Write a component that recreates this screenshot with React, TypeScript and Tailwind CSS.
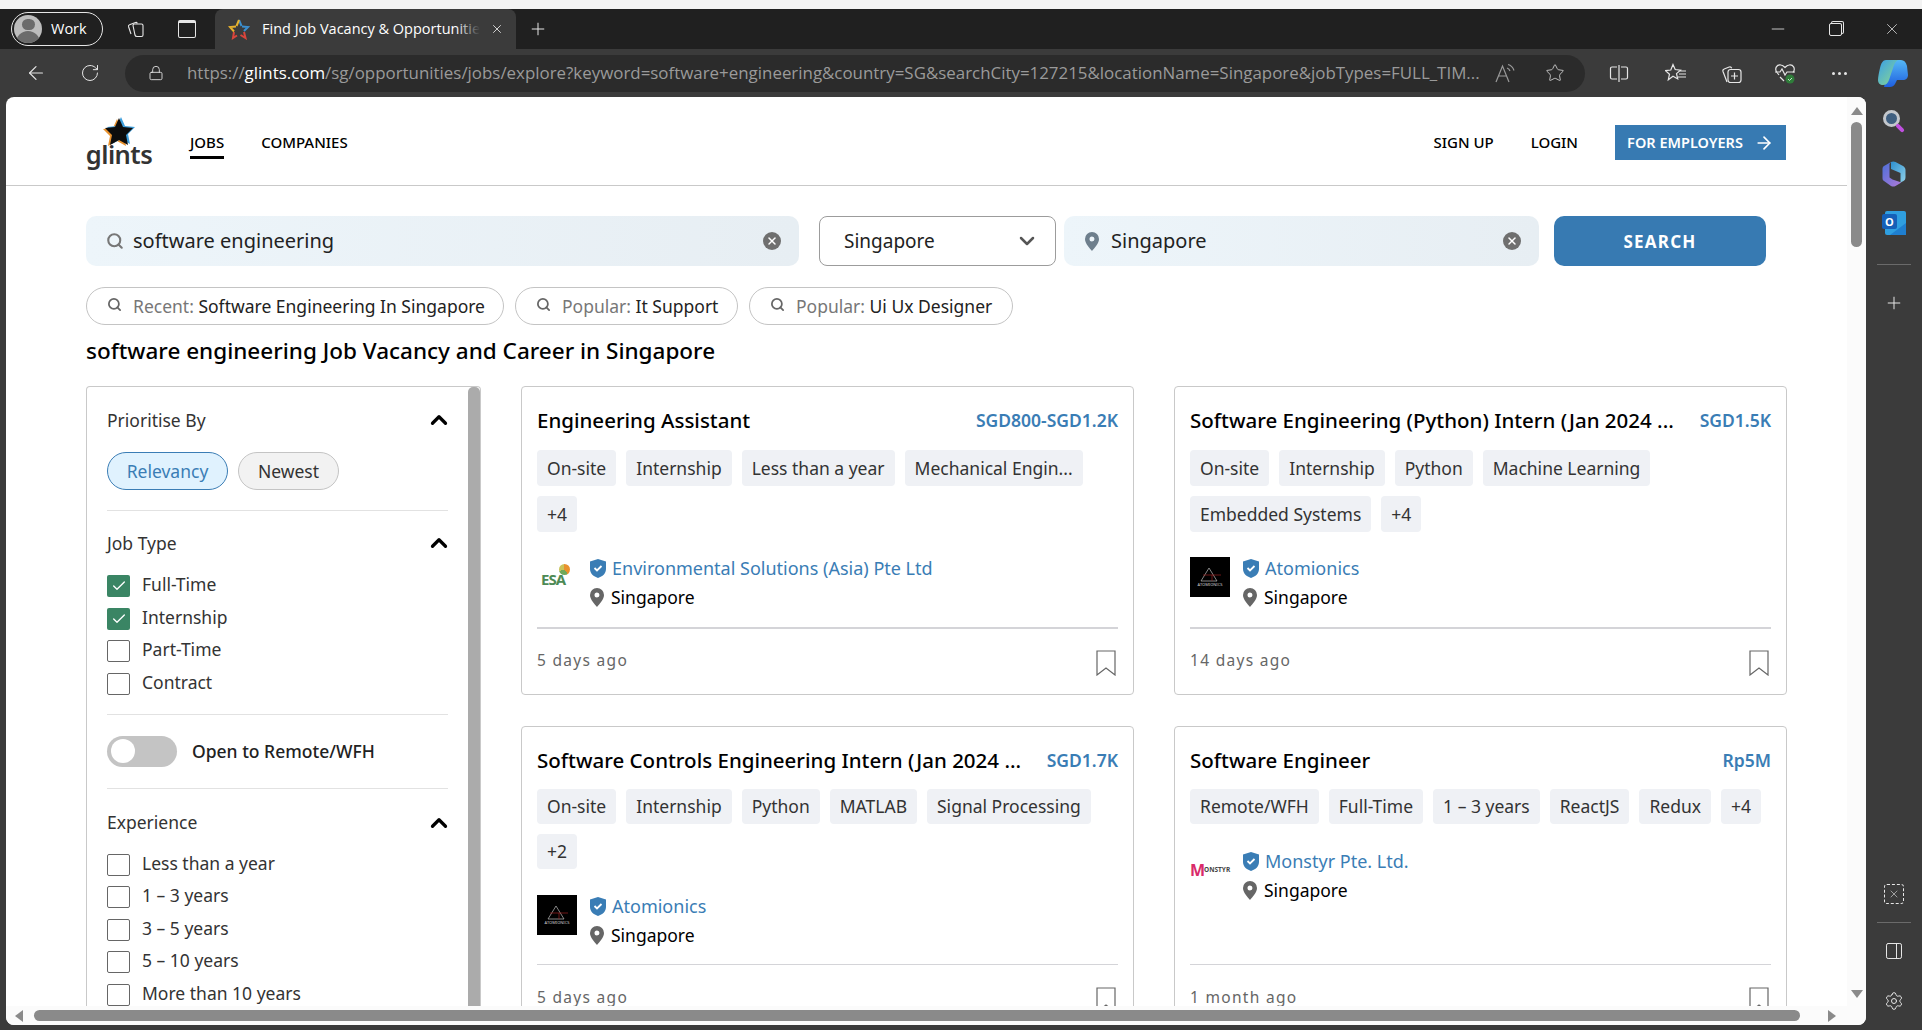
import React from "react";
import { ArrowLeft, ArrowRight, ChevronDown, ChevronUp, Check, Lock, Minus, PanelRight, Plus, RotateCw, Search, Settings, Star, X } from "lucide-react";

const FONT = "font-['Noto_Sans',sans-serif]";

const StarLogo = () => (
    <svg width="34" height="30" viewBox="0 0 34 30">
        <polygon transform="translate(-2 1)" fill="#e8912d" points="17,1 21,10 31,11 24,18 26,28 17,23 8,28 10,18 3,11 13,10" />
        <polygon transform="translate(2 -1)" fill="#3f9fdc" points="17,1 21,10 31,11 24,18 26,28 17,23 8,28 10,18 3,11 13,10" />
        <polygon fill="#0d0d0d" points="17,1 21,10 31,11 24,18 26,28 17,23 8,28 10,18 3,11 13,10" />
    </svg>
);

const Favicon = () => (
    <svg width="22" height="22" viewBox="0 0 22 22" fill="none" strokeWidth="2">
        <path d="M11 2l2.5 6" stroke="#3b8fd0" />
        <path d="M14 8.5l6 .5-4 4" stroke="#3b8fd0" />
        <path d="M16 14l1.5 6-5-3" stroke="#d9453c" />
        <path d="M9 17.5L5 20l1-6" stroke="#d9453c" />
        <path d="M6 13.5L2 9l6-.5" stroke="#e8b22d" />
        <path d="M8.5 8L11 2" stroke="#e8b22d" />
    </svg>
);

const Shield = () => (
    <svg width="16" height="19" viewBox="0 0 16 19" className="shrink-0">
        <path d="M8 0l8 2.5V10c0 4.5-3.5 7.5-8 9-4.500-1.500-8-4.500-8-9V2.500z" fill="#3a7db5" />
        <path d="M4.500 9l2.500 2.500 4.500-4.500" stroke="#fff" strokeWidth="1.800" fill="none" />
    </svg>
);

const Pin = () => (
    <svg width="14" height="19" viewBox="0 0 14 19" className="shrink-0">
        <path fillRule="evenodd" d="M7 0a7 7 0 017 7c0 4.500-4.500 9-7 12-2.500-3-7-7.500-7-12a7 7 0 017-7zm0 4.500a2.500 2.500 0 100 5 2.500 2.500 0 000-5z" fill="#666" />
    </svg>
);

const ClearIcon = () => (
    <div className="w-[18px] h-[18px] rounded-full bg-[#6f6f6f] flex items-center justify-center">
        <X className="w-3 h-3 text-white" strokeWidth={3} />
    </div>
);

const EsaLogo = () => (
    <div className="w-10 h-10 shrink-0 relative flex items-end">
        <span className="text-[15px] font-bold text-[#4d8a55] leading-none tracking-[-1px] ml-1 mb-[10px]">ESA</span>
        <div className="absolute left-[22px] top-[7px] w-[11px] h-[11px] rounded-full bg-[conic-gradient(#e8912d_0_40%,#6fa85a_40%_70%,#c9c35a_70%_100%)]" />
    </div>
);

const AtomLogo = () => (
    <div className="w-10 h-10 bg-black flex flex-col items-center justify-center shrink-0">
        <svg width="26" height="16" viewBox="0 0 26 16" fill="none" strokeWidth="0.700">
            <path d="M12 1L4 14h16z" stroke="#bbb" />
            <path d="M6 8h18M15 8v6" stroke="#9c2020" />
        </svg>
        <span className="text-[4px] leading-none text-[#ccc]">ATOMIONICS</span>
    </div>
);

const MonstyrLogo = () => (
    <div className="w-10 h-10 shrink-0 flex items-center">
        <span className="text-[16px] font-bold text-[#d92b6a] leading-none">M</span>
        <span className="text-[6.500px] font-bold text-[#444] leading-none -ml-[1px]">ONSTYR</span>
    </div>
);

type Job = {
    title: string;
    salary: string;
    tags: string[];
    company: string;
    logo: React.ReactNode;
    time: string;
    secondRow?: boolean;
};

const jobs: Job[] = [
    { title: "Engineering Assistant", salary: "SGD800-SGD1.2K", tags: ["On-site", "Internship", "Less than a year", "Mechanical Engin...", "+4"], company: "Environmental Solutions (Asia) Pte Ltd", logo: <EsaLogo />, time: "5 days ago" },
    { title: "Software Engineering (Python) Intern (Jan 2024 ...", salary: "SGD1.5K", tags: ["On-site", "Internship", "Python", "Machine Learning", "Embedded Systems", "+4"], company: "Atomionics", logo: <AtomLogo />, time: "14 days ago" },
    { title: "Software Controls Engineering Intern (Jan 2024 ...", salary: "SGD1.7K", tags: ["On-site", "Internship", "Python", "MATLAB", "Signal Processing", "+2"], company: "Atomionics", logo: <AtomLogo />, time: "5 days ago", secondRow: true },
    { title: "Software Engineer", salary: "Rp5M", tags: ["Remote/WFH", "Full-Time", "1 – 3 years", "ReactJS", "Redux", "+4"], company: "Monstyr Pte. Ltd.", logo: <MonstyrLogo />, time: "1 month ago", secondRow: true },
];

function JobCard({ job }: { job: Job }) {
    return (
        <div className="border border-[#c9c9c9] rounded-[4px] px-[15px] flex flex-col">
            <div className="flex justify-between items-center h-[24px] mt-[21px] gap-4">
                <span className="text-[20.500px] font-medium text-black whitespace-nowrap">{job.title}</span>
                <span className="text-[17.500px] font-semibold text-[#3a7db5] whitespace-nowrap">{job.salary}</span>
            </div>
            <div className={job.secondRow ? "flex flex-wrap gap-[10px] mt-[17px]" : "flex flex-wrap gap-[10px] mt-[18px]"}>
                {job.tags.map((tag) => (
                    <span key={tag} className={job.secondRow
                        ? "h-[35px] px-[10px] flex items-center bg-[#eff1f5] rounded-[4px] text-[17.500px] text-[#333]"
                        : "h-[36px] px-[10px] flex items-center bg-[#eff1f5] rounded-[4px] text-[17.500px] text-[#333]"}>{tag}</span>
                ))}
            </div>
            <div className={job.secondRow ? "flex gap-[13px] mt-[26px]" : "flex gap-[13px] mt-[25px]"}>
                {job.logo}
                <div className="flex flex-col -mt-[2px]">
                    <div className="flex items-center gap-[6px] h-[26px]">
                        <Shield />
                        <span className="text-[18px] text-[#3a7db5] whitespace-nowrap">{job.company}</span>
                    </div>
                    <div className="flex items-center gap-[7px] h-[30px] mt-[1px]">
                        <Pin />
                        <span className="text-[17.500px] text-black">Singapore</span>
                    </div>
                </div>
            </div>
            <div className={job.secondRow
                ? "mt-auto h-[67px] shrink-0 border-t border-[#d4d4d8] flex justify-between pt-[22px]"
                : "mt-auto h-[67px] shrink-0 border-t-2 border-[#d4d4d8] flex justify-between pt-[21px]"}>
                <span className="text-[15.500px] tracking-[1.300px] text-[#666] leading-[20px]">{job.time}</span>
                <svg width="20" height="26" viewBox="0 0 20 26" fill="none" stroke="#666" strokeWidth="1.200" className="mr-[2px]">
                    <path d="M1 1h18v24l-9-7-9 7z" />
                </svg>
            </div>
        </div>
    );
}

function CheckRow({ label, checked }: { label: string; checked?: boolean }) {
    return (
        <div className="flex items-center gap-[12px] h-[22px] mb-[10.500px]">
            {checked ? (
                <div className="w-[23px] h-[22px] rounded-[2px] bg-[#3a8564] flex items-center justify-center">
                    <Check className="w-4 h-4 text-white" strokeWidth={2} />
                </div>
            ) : (
                <div className="w-[23px] h-[22px] rounded-[2px] border border-[#666] bg-white" />
            )}
            <span className="text-[17.500px] text-[#333] -mt-[3px]">{label}</span>
        </div>
    );
}

function SectionTitle({ title }: { title: string }) {
    return (
        <div className="flex justify-between items-center h-[24px]">
            <span className="text-[17.500px] text-[#333]">{title}</span>
            <ChevronUp className="w-[26px] h-[26px] text-black -mr-[4px]" strokeWidth={3} />
        </div>
    );
}

function FilterPanel() {
    return (
        <div className="w-[395px] shrink-0 border-x border-t border-[#c9c9c9] rounded-t-[4px] flex h-[700px]">
            <div className="w-[341px] ml-5 pt-[21px]">
                <SectionTitle title="Prioritise By" />
                <div className="flex gap-[10px] mt-[20px]">
                    <span className="h-[38px] w-[121px] flex items-center justify-center rounded-full border border-[#3a7db5] bg-[#e0f2fe] text-[17.500px] text-[#3a7db5]">Relevancy</span>
                    <span className="h-[38px] w-[101px] flex items-center justify-center rounded-full border border-[#c4c4c4] bg-[#f2f2f2] text-[17.500px] text-[#333]">Newest</span>
                </div>
                <div className="border-t border-[#e2e2e2] mt-[20px]" />
                <div className="mt-[20px]"><SectionTitle title="Job Type" /></div>
                <div className="mt-[20px]">
                    <CheckRow label="Full-Time" checked />
                    <CheckRow label="Internship" checked />
                    <CheckRow label="Part-Time" />
                    <CheckRow label="Contract" />
                </div>
                <div className="border-t border-[#e2e2e2] mt-[19px]" />
                <div className="flex items-center gap-[15px] mt-[21px] h-[31px]">
                    <div className="w-[70px] h-[31px] rounded-full bg-[#c4c4c4] flex items-center pl-[4px]">
                        <div className="w-[24px] h-[24px] rounded-full bg-white" />
                    </div>
                    <span className="text-[17.500px] font-medium text-[#222]">Open to Remote/WFH</span>
                </div>
                <div className="border-t border-[#e2e2e2] mt-[21px]" />
                <div className="mt-[22px]"><SectionTitle title="Experience" /></div>
                <div className="mt-[19px]">
                    <CheckRow label="Less than a year" />
                    <CheckRow label="1 – 3 years" />
                    <CheckRow label="3 – 5 years" />
                    <CheckRow label="5 – 10 years" />
                    <CheckRow label="More than 10 years" />
                </div>
            </div>
            <div className="ml-auto w-[12px] bg-[#ababab] rounded-t-[5px]" />
        </div>
    );
}

function Chip({ kind, term, width }: { kind: string; term: string; width: string }) {
    return (
        <div className={`h-[38px] rounded-full border border-[#c4c4c4] flex items-center pl-[20px] gap-[11px] text-[17.500px] whitespace-nowrap ${width}`}>
            <Search className="w-[15px] h-[15px] text-[#666] -mt-[3px]" strokeWidth={2.800} />
            <span><span className="text-[#777]">{kind}: </span><span className="text-[#222]">{term}</span></span>
        </div>
    );
}

function MainPage() {
    return (
        <main className="flex-1 min-w-0 overflow-hidden">
            <header className="h-[89px] border-b border-[#c9c9c9] pl-[80px] pr-[61px] pt-[3px] flex items-center">
                <div className="flex flex-col items-center w-[68px] -mt-[4px] -ml-[1px]">
                    <StarLogo />
                    <span className="text-[25.500px] font-semibold text-[#333] leading-[22px] -mt-[4px] tracking-[-0.500px]">glints</span>
                </div>
                <div className="ml-[37px] relative text-[15px] font-medium text-black">
                    JOBS
                    <div className="absolute left-0 right-0 top-[25px] h-[3px] bg-black" />
                </div>
                <span className="ml-[37px] text-[15px] font-medium text-black">COMPANIES</span>
                <span className="ml-auto text-[15px] font-medium text-black">SIGN UP</span>
                <span className="ml-[37px] text-[15px] font-medium text-black">LOGIN</span>
                <div className="ml-[37px] w-[171px] h-[35px] bg-[#377ab2] text-white flex items-center justify-center gap-[11px]">
                    <span className="text-[14.500px] font-semibold">FOR EMPLOYERS</span>
                    <ArrowRight className="w-5 h-5" strokeWidth={2} />
                </div>
            </header>
            <div className="pl-[80px] pr-[60px]">
                <div className="flex pt-[30px] h-[80px]">
                    <div className="w-[713px] rounded-[10px] bg-gradient-to-r from-[#edf5fa] to-[#e7eef3] flex items-center pl-[20px] pr-[18px]">
                        <Search className="w-[18px] h-[18px] text-[#777]" strokeWidth={2.800} />
                        <span className="ml-[9px] text-[20px] text-[#222]">software engineering</span>
                        <div className="ml-auto"><ClearIcon /></div>
                    </div>
                    <div className="ml-5 w-[237px] rounded-[8px] border border-[#9c9c9c] flex items-center justify-between pl-[24px] pr-[16px]">
                        <span className="text-[19px] text-[#222]">Singapore</span>
                        <ChevronDown className="w-[24px] h-[24px] text-[#555]" strokeWidth={2.500} />
                    </div>
                    <div className="ml-2 w-[475px] rounded-[10px] bg-gradient-to-r from-[#edf5fa] to-[#e7eef3] flex items-center pl-[21px] pr-[18px]">
                        <div className="[&_path]:fill-[#6e7f8d]"><Pin /></div>
                        <span className="ml-[12px] text-[20px] text-[#222]">Singapore</span>
                        <div className="ml-auto"><ClearIcon /></div>
                    </div>
                    <div className="ml-[15px] w-[212px] rounded-[10px] bg-[#377ab2] flex items-center justify-center text-white text-[17px] font-bold tracking-[1.200px] pt-[1px]">SEARCH</div>
                </div>
                <div className="flex gap-[11px] mt-[21px]">
                    <Chip kind="Recent" term="Software Engineering In Singapore" width="w-[418px]" />
                    <Chip kind="Popular" term="It Support" width="w-[223px]" />
                    <Chip kind="Popular" term="Ui Ux Designer" width="w-[264px]" />
                </div>
                <h1 className="mt-[11px] h-[29px] text-[22.500px] font-medium leading-[29px] text-black">software engineering Job Vacancy and Career in Singapore</h1>
                <div className="flex gap-10 mt-[21px]">
                    <FilterPanel />
                    <div className="grid grid-cols-2 gap-x-10 gap-y-[31px] grid-rows-[309px_306px] w-[1266px]">
                        {jobs.map((job) => (
                            <JobCard key={job.title} job={job} />
                        ))}
                    </div>
                </div>
            </div>
        </main>
    );
}

const TabsIcon = () => (
    <svg width="20" height="20" viewBox="0 0 20 20" fill="none" stroke="#e6e6e6" strokeWidth="1.100">
        <path d="M7 6.500a1.500 1.500 0 011.500-1.500h7a1.500 1.500 0 011.500 1.500v9.500a1.500 1.500 0 01-1.500 1.500h-4.500a2 2 0 01-2-1.500z" />
        <path d="M5 15L2.500 7.500a1.500 1.500 0 011-1.800L9.500 3.500a1.500 1.500 0 011.800 1" />
    </svg>
);

const CopilotIcon = () => (
    <svg width="32" height="32" viewBox="0 0 32 32">
        <defs>
            <linearGradient id="cpA" x1="0" y1="0" x2="1" y2="1"><stop offset="0" stopColor="#3a9fe8" /><stop offset="1" stopColor="#8fdc8a" /></linearGradient>
            <linearGradient id="cpB" x1="0" y1="0" x2="0" y2="1"><stop offset="0" stopColor="#55b8f5" /><stop offset="1" stopColor="#1e5fe0" /></linearGradient>
        </defs>
        <path d="M14 3h10c3 0 5 2 6 6l1 9c0 3-2 5-5 5h-6l-2 4c-1 2-3 3-5 3H7z" fill="url(#cpB)" />
        <path d="M9 3h13c-2 0-4 2-5 5l-5 15c-1 3-3 5-6 5-3 0-5-2-5-5 0-3 1-8 2-12 1-5 3-8 6-8z" fill="url(#cpA)" />
    </svg>
);

const ReadAloud = () => (
    <svg width="22" height="20" viewBox="0 0 22 20" fill="none" stroke="#9a9a9a" strokeWidth="1.200">
        <path d="M1 19L7.500 3 14 19M3.500 13h8" />
        <path d="M12 5c1.500.5 2.500 1.500 3 3M13 1.500c3 .8 5 3 6 6" />
    </svg>
);

const SplitIcon = () => (
    <svg width="20" height="20" viewBox="0 0 20 20" fill="none" stroke="#e6e6e6" strokeWidth="1.200">
        <path d="M8 4H3a1.500 1.500 0 00-1.500 1.500v9A1.500 1.500 0 003 16h5M12 4h5a1.500 1.500 0 011.500 1.500v9A1.500 1.500 0 0117 16h-5M10 2v17" />
    </svg>
);

const FavoritesIcon = () => (
    <svg width="22" height="20" viewBox="0 0 22 20" fill="none" stroke="#e6e6e6" strokeWidth="1.200">
        <path d="M8 1.500l2.200 5 5.300.6-4 3.500 1.200 5.300L8 13.200l-4.700 3.500 1.200-5.500-4-3.600 5.300-.6zM14 8h7M14 11h7M13 14h8" />
    </svg>
);

const CollectionsIcon = () => (
    <svg width="22" height="22" viewBox="0 0 22 22" fill="none" stroke="#e6e6e6" strokeWidth="1.200">
        <path d="M6 20L2 9.500a2 2 0 011.200-2.500l5-2a2 2 0 012.500 1.200" />
        <rect x="7" y="7.500" width="13" height="13" rx="2.500" />
        <path d="M13.500 10.500v7M10 14h7" />
    </svg>
);

const HealthIcon = () => (
    <svg width="22" height="22" viewBox="0 0 22 22" className="relative">
        <path d="M5 13L3 10.500C0 6.500 3 2 7 3c1.500.3 3 1.500 4 2.500 1-1 2.500-2.200 4-2.500 4-1 7 3.500 4 7.500" fill="none" stroke="#e6e6e6" strokeWidth="1.200" />
        <path d="M1 10h5l2-3 3 6 2-3h8M6 15l4 4" fill="none" stroke="#e6e6e6" strokeWidth="1.200" />
        <circle cx="16" cy="17" r="4.500" fill="#2f7d3a" />
        <path d="M14 17l1.500 1.500 2.500-2.500" stroke="#bfe5c3" fill="none" />
    </svg>
);

const M365Icon = () => (
    <svg width="24" height="26" viewBox="0 0 24 26" className="mt-[29px]">
        <defs>
            <linearGradient id="msA" x1="0" y1="0" x2="1" y2="1"><stop offset="0" stopColor="#4b6fd8" /><stop offset="1" stopColor="#b07ad8" /></linearGradient>
            <linearGradient id="msB" x1="0" y1="0" x2="1" y2="1"><stop offset="0" stopColor="#2c8fd0" /><stop offset="1" stopColor="#8fd0e8" /></linearGradient>
        </defs>
        <path d="M9 1L2 5c-1 .6-1.500 1.500-1.500 3v9c0 1.500.5 2.500 1.500 3l7 5c1.500.8 3 .8 4.500 0l6-3.500-9-3-3-2V3z" fill="url(#msA)" />
        <path d="M9 1c1.500-.8 3-.8 4.500 0L21 5c1.500 1 2.500 2 2.500 4v7c0 2-.5 3-2 4l-3 1.500V12L9 8z" fill="url(#msB)" />
    </svg>
);

const OutlookIcon = () => (
    <div className="mt-[24px] w-[24px] h-[24px] relative shrink-0">
        <div className="absolute left-[3px] top-0 right-0 bottom-0 rounded-[2px] bg-[#2f9fe0]" />
        <div className="absolute left-[8px] right-0 bottom-0 h-[12px] bg-[#1f7fd0] [clip-path:polygon(0_100%,100%_100%,100%_0)]" />
        <div className="absolute left-0 top-[3px] w-[15px] h-[15px] rounded-[2px] bg-[#1560b8] flex items-center justify-center text-white text-[11px] leading-none font-bold font-['Open_Sans',sans-serif]">O</div>
    </div>
);

function BrowserChrome() {
    const thin = "text-[#e6e6e6]";
    return (
        <>
            <div className="h-[9px] bg-[#f3f3f3]" />
            <div className="h-10 bg-[#202020] flex items-end relative">
                <div className="absolute left-[11px] top-[3px] w-[92px] h-[34px] rounded-full border border-[#e6e6e6] flex items-center pl-[2px] gap-[9px]">
                    <div className="w-[28px] h-[28px] rounded-full bg-[#bdbdbd] overflow-hidden flex flex-col items-center">
                        <div className="w-[13px] h-[13px] rounded-full bg-[#6b6b6b] mt-[4px]" />
                        <div className="w-[24px] h-[14px] rounded-t-full bg-[#6b6b6b] mt-[1px]" />
                    </div>
                    <span className="text-[14.500px] text-white font-['Open_Sans',sans-serif]">Work</span>
                </div>
                <div className="ml-[126px] w-5 h-[40px] flex items-center"><TabsIcon /></div>
                <div className="ml-[32px] h-[40px] flex items-center">
                    <div className="w-[18px] h-[18px] rounded-[2px] border border-[#e6e6e6] border-t-[3px]" />
                </div>
                <div className="ml-[19px] w-[301px] h-[40px] bg-[#3b3b3b] rounded-t-[8px] flex items-center pl-[13px] pr-[12px]">
                    <Favicon />
                    <div className="ml-[12px] w-[218px] relative overflow-hidden">
                        <span className="block text-[14.500px] text-white font-['Open_Sans',sans-serif] whitespace-nowrap">Find Job Vacancy &amp; Opportunities</span>
                        <div className="absolute right-0 top-0 bottom-0 w-6 bg-gradient-to-r from-transparent to-[#3b3b3b]" />
                    </div>
                    <X className={`ml-auto w-[14px] h-[14px] ${thin}`} strokeWidth={1.500} />
                </div>
                <div className="h-[40px] ml-[12px] flex items-center"><Plus className={`w-5 h-5 ${thin}`} strokeWidth={1.200} /></div>
                <div className="ml-auto h-[40px] flex items-center gap-[41px] pr-[21px]">
                    <Minus className={`w-5 h-5 ${thin}`} strokeWidth={1} />
                    <div className="w-[13px] h-[13px] border border-[#e6e6e6] rounded-[2px] shadow-[2px_-2px_0_-1px_#202020,2px_-2px_0_0_#e6e6e6]" />
                    <X className={`w-[18px] h-[18px] ${thin}`} strokeWidth={1} />
                </div>
            </div>
            <div className="h-12 bg-[#3b3b3b] flex items-center">
                <ArrowLeft className={`ml-[25px] w-[22px] h-[22px] ${thin}`} strokeWidth={1.300} />
                <RotateCw className={`ml-[33px] w-[20px] h-[20px] ${thin}`} strokeWidth={1.200} />
                <div className="ml-[25px] w-[1460px] h-[37px] shrink-0 rounded-full bg-[#2b2b2b] flex items-center pl-[23px]">
                    <Lock className={`w-[16px] h-[18px] shrink-0 ${thin}`} strokeWidth={1.300} />
                    <span className="ml-[23px] w-[1298px] shrink-0 text-[16.900px] text-[#9a9a9a] font-['Open_Sans',sans-serif] whitespace-nowrap">
                        https://<span className="text-white">glints.com</span>/sg/opportunities/jobs/explore?keyword=software+engineering&amp;country=SG&amp;searchCity=127215&amp;locationName=Singapore&amp;jobTypes=FULL_TIM...
                    </span>
                    <div className="ml-[10px] shrink-0"><ReadAloud /></div>
                    <Star className="ml-[28px] w-5 h-5 shrink-0 text-[#bdbdbd]" strokeWidth={1.200} />
                </div>
                <div className="ml-[24px]"><SplitIcon /></div>
                <div className="ml-[36px]"><FavoritesIcon /></div>
                <div className="ml-[34px]"><CollectionsIcon /></div>
                <div className="ml-[31px]"><HealthIcon /></div>
                <div className="ml-[36px] flex gap-[3px]">
                    <div className="w-[3px] h-[3px] rounded-full bg-[#e6e6e6]" />
                    <div className="w-[3px] h-[3px] rounded-full bg-[#e6e6e6]" />
                    <div className="w-[3px] h-[3px] rounded-full bg-[#e6e6e6]" />
                </div>
                <div className="ml-[30px]"><CopilotIcon /></div>
            </div>
        </>
    );
}

function SideBar() {
    const thin = "text-[#e6e6e6]";
    return (
        <aside className="w-[56px] shrink-0 flex flex-col items-center">
            <div className="mt-[13px] h-[22px] relative w-[22px] shrink-0">
                <div className="w-[17px] h-[17px] rounded-full border-[3px] border-[#c3c7cc] bg-[#3f5f80]" />
                <div className="absolute right-0 bottom-[2px] w-[10px] h-[4px] rounded-full bg-[#c050e0] rotate-45" />
            </div>
            <M365Icon />
            <OutlookIcon />
            <div className="mt-[29px] w-[34px] border-t border-[#6a6a6a]" />
            <Plus className={`mt-[28px] w-5 h-5 ${thin}`} strokeWidth={1.200} />
            <div className="mt-auto w-5 h-5 border border-dashed border-[#e6e6e6] rounded-[3px] flex items-center justify-center">
                <X className={`w-3 h-3 ${thin}`} strokeWidth={1.200} />
            </div>
            <div className="mt-[18px] w-[34px] border-t border-[#6a6a6a]" />
            <PanelRight className={`mt-[18px] w-5 h-5 ${thin}`} strokeWidth={1.200} />
            <Settings className={`mt-[30px] mb-[19px] w-5 h-5 ${thin}`} strokeWidth={1.200} />
        </aside>
    );
}

export default function App() {
    return (
        <div className={`h-screen w-screen overflow-hidden flex flex-col bg-[#1c1c1c] ${FONT}`}>
            <BrowserChrome />
            <div className="h-[933px] bg-[#3b3b3b] flex shrink-0">
                <div className="ml-[6px] flex-1 min-w-0 bg-white rounded-t-[8px] rounded-b-[8px] flex flex-col overflow-hidden h-[928px]">
                    <div className="h-[909px] flex shrink-0">
                        <MainPage />
                        {/* Page scrollbar */}
                        <div className="w-[19px] shrink-0 bg-[#fbfbfb] flex flex-col items-center">
                            <div className="mt-[10px] w-0 h-0 border-x-[6px] border-x-transparent border-b-[8px] border-b-[#8a8a8a]" />
                            <div className="mt-[7px] w-[11px] h-[125px] rounded-full bg-[#8a8a8a]" />
                            <div className="mt-auto mb-[8px] w-0 h-0 border-x-[6px] border-x-transparent border-t-[8px] border-t-[#8a8a8a]" />
                        </div>
                    </div>
                    <div className="flex-1 bg-[#fbfbfb] flex items-center pl-[9px]">
                        <div className="w-0 h-0 border-y-[6px] border-y-transparent border-r-[8px] border-r-[#8a8a8a]" />
                        <div className="ml-[11px] w-[1766px] h-[11px] rounded-full bg-[#8a8a8a]" />
                        <div className="ml-[28px] w-0 h-0 border-y-[6px] border-y-transparent border-l-[8px] border-l-[#8a8a8a]" />
                    </div>
                </div>
                <SideBar />
            </div>
        </div>
    );
}
